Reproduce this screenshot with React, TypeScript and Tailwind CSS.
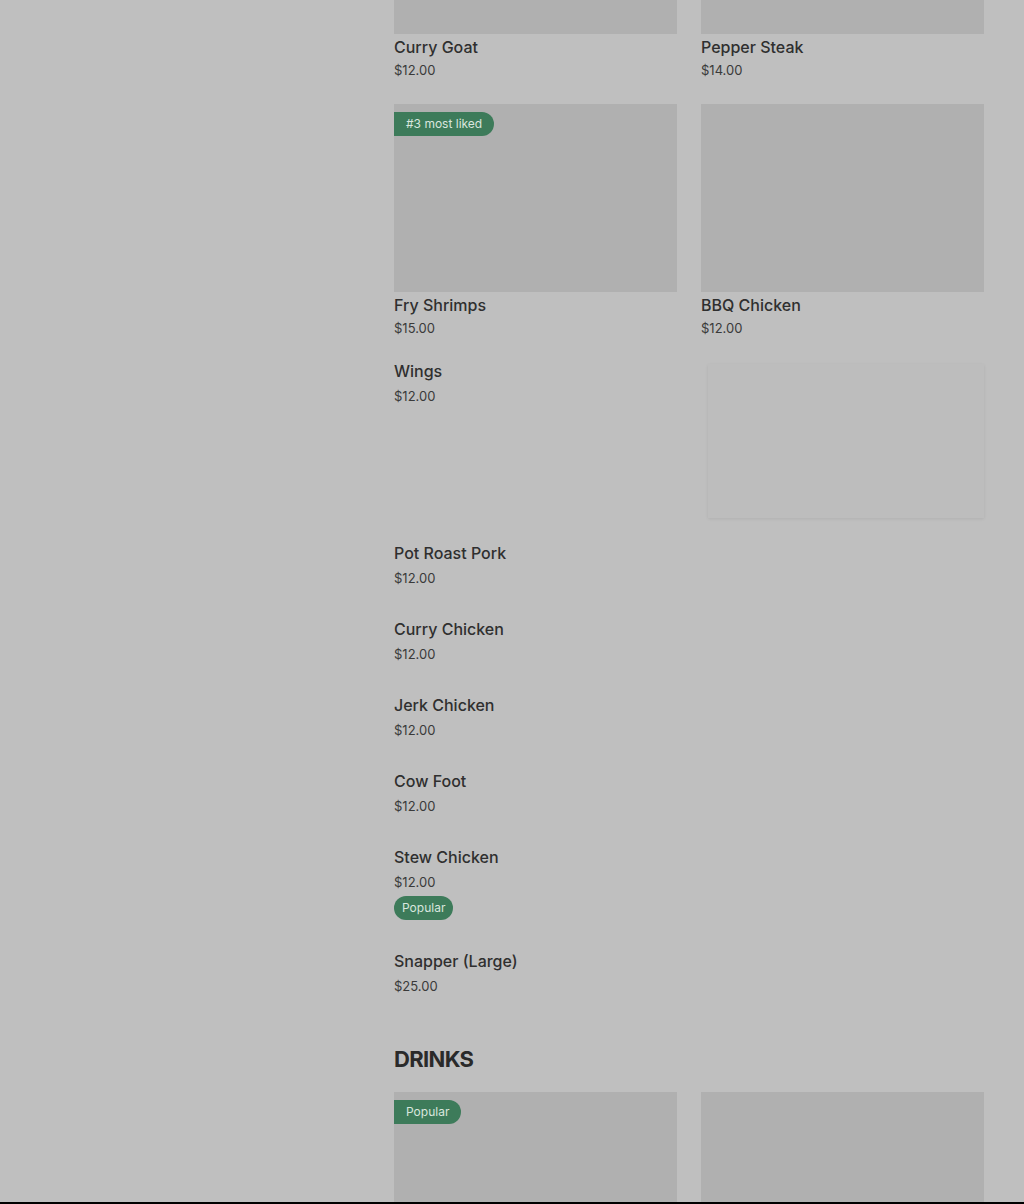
import React from 'react';

interface Dish {
  name: string;
  price: string;
  badge?: string;
}

const topGrid: Dish[] = [
  { name: 'Curry Goat', price: '$12.00' },
  { name: 'Pepper Steak', price: '$14.00' },
  { name: 'Fry Shrimps', price: '$15.00', badge: '#3 most liked' },
  { name: 'BBQ Chicken', price: '$12.00' },
];

const listItems: Dish[] = [
  { name: 'Pot Roast Pork', price: '$12.00' },
  { name: 'Curry Chicken', price: '$12.00' },
  { name: 'Jerk Chicken', price: '$12.00' },
  { name: 'Cow Foot', price: '$12.00' },
  { name: 'Stew Chicken', price: '$12.00', badge: 'Popular' },
  { name: 'Snapper (Large)', price: '$25.00' },
];

const drinks: Dish[] = [
  { name: '', price: '', badge: 'Popular' },
  { name: '', price: '' },
];

function GridCard({ dish }: { dish: Dish }) {
  return (
    <div className="flex flex-col">
      <div className="relative h-[188px] bg-[#b0b0b0]">
        {dish.badge && (
          <span className="absolute left-0 top-2 flex h-6 items-center rounded-r-full bg-[#3d7b5a] pl-3 pr-3 text-[12px] text-[#d9e6de]">
            {dish.badge}
          </span>
        )}
      </div>
      {dish.name && (
        <>
          <div className="mt-[1px] text-[16px] font-medium leading-6 text-[#2f2f2f]">{dish.name}</div>
          <div className="pt-[1px] text-[13px] leading-[21px] text-[#3a3a3a]">{dish.price}</div>
        </>
      )}
    </div>
  );
}

function ListItem({ dish }: { dish: Dish }) {
  return (
    <div className="pt-4 pb-[13px]">
      <div className="text-[16px] font-medium leading-6 text-[#2f2f2f]">{dish.name}</div>
      <div className="mt-[3px] text-[13px] leading-5 text-[#3a3a3a]">{dish.price}</div>
      {dish.badge && (
        <span className="mt-1 inline-flex h-6 items-center rounded-full bg-[#3d7b5a] px-2 text-[12px] text-[#d9e6de]">
          {dish.badge}
        </span>
      )}
    </div>
  );
}

export default function App() {
  return (
    <div
      className="flex h-[1204px] flex-col overflow-hidden bg-[#bfbfbf]"
      style={{ fontFamily: 'Inter, "Noto Sans", sans-serif' }}
    >
      <div className="flex flex-1 overflow-hidden">
        <aside className="w-[394px] shrink-0" />
        <main className="w-[590px] shrink-0">
          <div className="mt-[-154px] grid grid-cols-2 gap-x-6 gap-y-[23px]">
            {topGrid.map((d) => (
              <GridCard key={d.name} dish={d} />
            ))}
          </div>

          <div className="mt-[4px] flex items-start justify-between pt-4 pb-[7px]">
            <div>
              <div className="text-[16px] font-medium leading-6 text-[#2f2f2f]">Wings</div>
              <div className="mt-[3px] text-[13px] leading-5 text-[#3a3a3a]">$12.00</div>
            </div>
            <div className="mt-[5px] h-[154px] w-[276px] bg-[#bdbdbd] shadow-[0_1px_3px_rgba(0,0,0,0.08)]" />
          </div>

          {listItems.map((d) => (
            <ListItem key={d.name} dish={d} />
          ))}

          <h2 className="mt-9 text-[22px] font-bold leading-7 tracking-[-0.03em] text-[#2a2a2a]">DRINKS</h2>

          <div className="mt-[19px] grid grid-cols-2 gap-x-6">
            {drinks.map((d, i) => (
              <GridCard key={i} dish={d} />
            ))}
          </div>
        </main>
      </div>
      <div className="h-[2px] shrink-0 bg-black" />
    </div>
  );
}
